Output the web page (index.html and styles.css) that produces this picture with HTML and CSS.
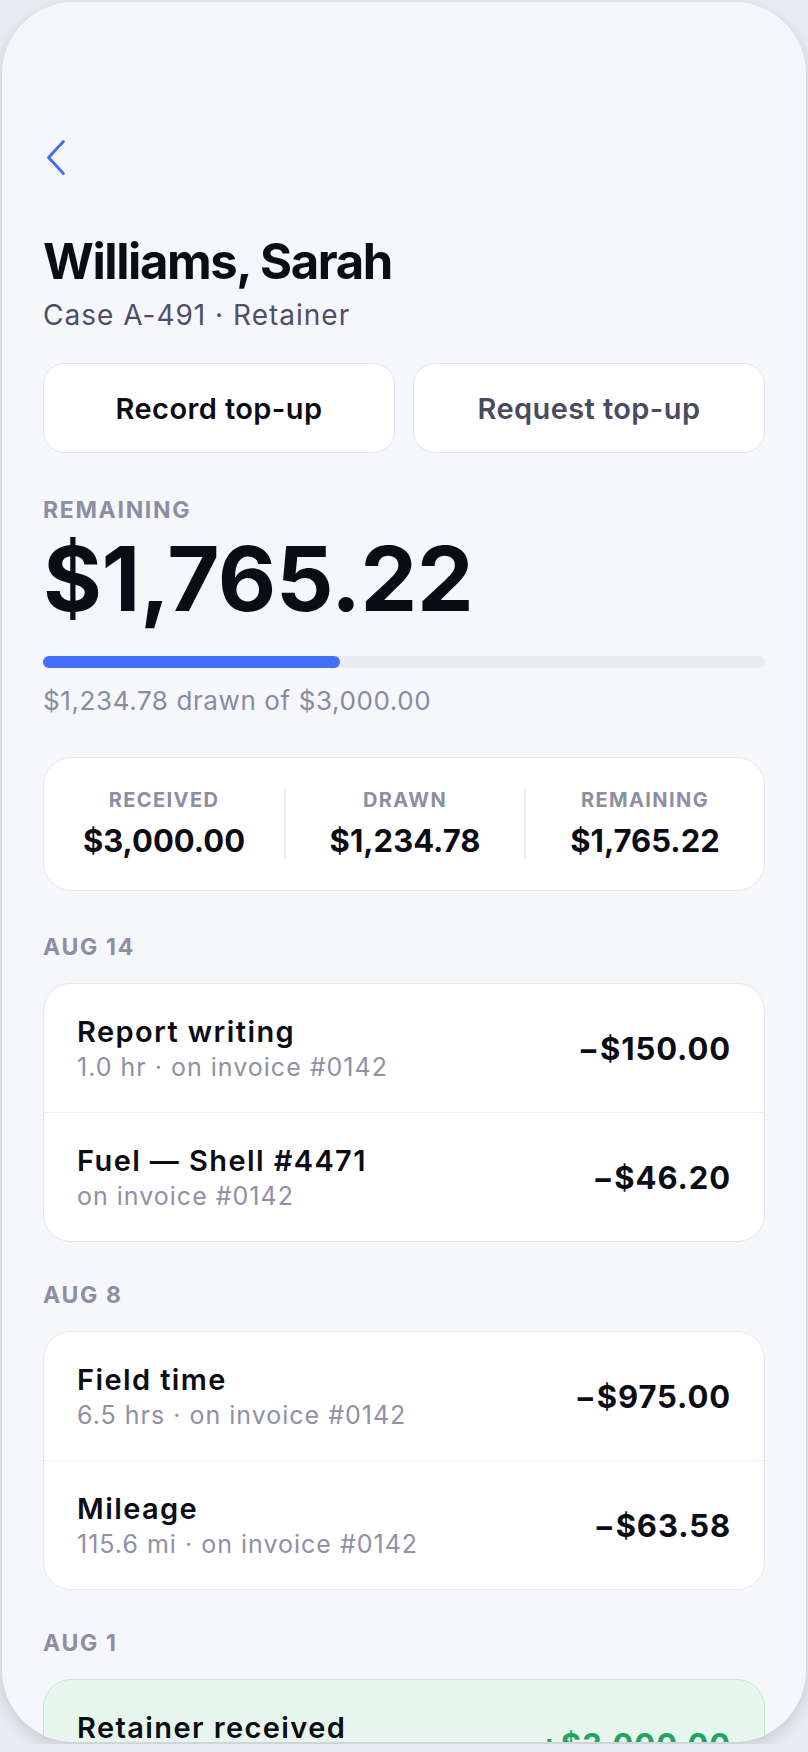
FILE: index.html
```html
<!DOCTYPE html>
<html lang="en">
<head>
    <meta charset="UTF-8">
    <title>Williams, Sarah - Retainer</title>
    <link rel="stylesheet" href="styles.css">
</head>
<body>
    <div class="phone">
        <div class="topbar">
            <svg class="back" width="24" height="40" viewBox="0 0 24 40">
                <path d="M18.4 3.6 L3.6 19.5 L18.4 35.4" fill="none" stroke="#4070f4" stroke-width="3" stroke-linecap="round" stroke-linejoin="round"/>
            </svg>
        </div>

        <h1 class="titulo">Williams, Sarah</h1>
        <p class="subtitulo">Case A-491 · Retainer</p>

        <div class="acoes">
            <button class="botao">Record top-up</button>
            <button class="botao secundario">Request top-up</button>
        </div>

        <div class="rotulo">Remaining</div>
        <div class="saldo">$1,765.22</div>
        <div class="barra"><div class="barra-fill" style="width: 41.16%;"></div></div>
        <p class="barra-info">$1,234.78 drawn of $3,000.00</p>

        <div class="resumo">
            <div class="resumo-col">
                <span class="resumo-rotulo">Received</span>
                <span class="resumo-valor">$3,000.00</span>
            </div>
            <div class="resumo-col">
                <span class="resumo-rotulo">Drawn</span>
                <span class="resumo-valor">$1,234.78</span>
            </div>
            <div class="resumo-col">
                <span class="resumo-rotulo">Remaining</span>
                <span class="resumo-valor">$1,765.22</span>
            </div>
        </div>

        <div class="data primeira">Aug 14</div>
        <div class="lista">
            <div class="item">
                <div class="item-texto">
                    <div class="item-nome">Report writing</div>
                    <div class="item-info">1.0 hr · on invoice #0142</div>
                </div>
                <div class="item-valor">−$150.00</div>
            </div>
            <div class="item">
                <div class="item-texto">
                    <div class="item-nome">Fuel — Shell #4471</div>
                    <div class="item-info">on invoice #0142</div>
                </div>
                <div class="item-valor">−$46.20</div>
            </div>
        </div>

        <div class="data">Aug 8</div>
        <div class="lista">
            <div class="item">
                <div class="item-texto">
                    <div class="item-nome">Field time</div>
                    <div class="item-info">6.5 hrs · on invoice #0142</div>
                </div>
                <div class="item-valor">−$975.00</div>
            </div>
            <div class="item">
                <div class="item-texto">
                    <div class="item-nome">Mileage</div>
                    <div class="item-info">115.6 mi · on invoice #0142</div>
                </div>
                <div class="item-valor">−$63.58</div>
            </div>
        </div>

        <div class="data">Aug 1</div>
        <div class="lista credito">
            <div class="item">
                <div class="item-texto">
                    <div class="item-nome">Retainer received</div>
                    <div class="item-info">Check #1187</div>
                </div>
                <div class="item-valor">+$3,000.00</div>
            </div>
        </div>
    </div>
</body>
</html>
```

FILE: styles.css
```css
* { box-sizing: border-box; }
body { margin: 0; background-color: #e9eaef; font-family: Inter, "Noto Sans", sans-serif; color: #0c0c14; }
.phone { margin: 2px; width: 804px; height: 1740px; overflow: hidden; background-color: #f6f7fb; border-radius: 72px; padding: 0 41px; box-shadow: 0 6px 14px rgba(30, 30, 60, 0.14); }

.topbar { padding-top: 136px; height: 178px; }
.back { display: block; margin-left: 2px; }

.titulo { margin: 52px 0 0; font-size: 49px; line-height: 60px; font-weight: 700; letter-spacing: -1.4px; }
.subtitulo { margin: 6px 0 0; font-size: 28px; line-height: 34px; letter-spacing: 1px; color: #4e4e66; }

.acoes { display: grid; grid-template-columns: 1fr 1fr; gap: 18px; margin-top: 31px; }
.botao { height: 90px; background: #fff; border: 1.5px solid #e3e5ee; border-radius: 22px; font-family: inherit; font-size: 29px; font-weight: 600; letter-spacing: 0.4px; color: #0c0c14; }
.botao.secundario { color: #4a4a60; }

.rotulo, .data { font-size: 23px; line-height: 28px; font-weight: 700; letter-spacing: 1.7px; text-transform: uppercase; color: #8e8ea3; }
.rotulo { margin-top: 43px; }
.saldo { margin-top: 10px; font-size: 90px; line-height: 90px; font-weight: 700; letter-spacing: -0.4px; }

.barra { margin-top: 32px; height: 12px; border-radius: 6px; background-color: #ebecf1; }
.barra-fill { height: 100%; border-radius: 6px; background-color: #4070f4; }
.barra-info { margin: 17px 0 0; font-size: 26px; line-height: 32px; letter-spacing: 0.6px; color: #8a8aa0; }

.resumo { display: grid; grid-template-columns: repeat(3, 1fr); margin-top: 40px; padding: 30px 0 31px; background: #fff; border: 1px solid #e6e8ef; border-radius: 28px; }
.resumo-col { display: flex; flex-direction: column; align-items: center; gap: 11px; }
.resumo-col + .resumo-col { border-left: 2px solid #eceef3; }
.resumo-rotulo { font-size: 20px; line-height: 24px; font-weight: 700; letter-spacing: 1.4px; text-transform: uppercase; color: #8e8ea3; }
.resumo-valor { font-size: 31px; line-height: 36px; font-weight: 700; }

.data { margin-top: 39px; }
.data.primeira { margin-top: 42px; }
.lista { margin-top: 22px; background: #fff; border: 1px solid #e6e8ef; border-radius: 28px; overflow: hidden; }
.item { display: flex; align-items: center; justify-content: space-between; padding: 31px 33px 30px; }
.item + .item { border-top: 1px solid #eceef3; }
.item-nome { font-size: 29px; line-height: 34px; font-weight: 600; letter-spacing: 1.4px; }
.item-info { margin-top: 3px; font-size: 25px; line-height: 30px; letter-spacing: 1px; color: #9090a6; }
.item-valor { font-size: 31px; line-height: 36px; font-weight: 700; letter-spacing: 0.9px; }

.credito { background-color: #e7f6ed; border: 1.5px solid #c5e9d3; }
.credito .item-valor { color: #1fa463; }
```
